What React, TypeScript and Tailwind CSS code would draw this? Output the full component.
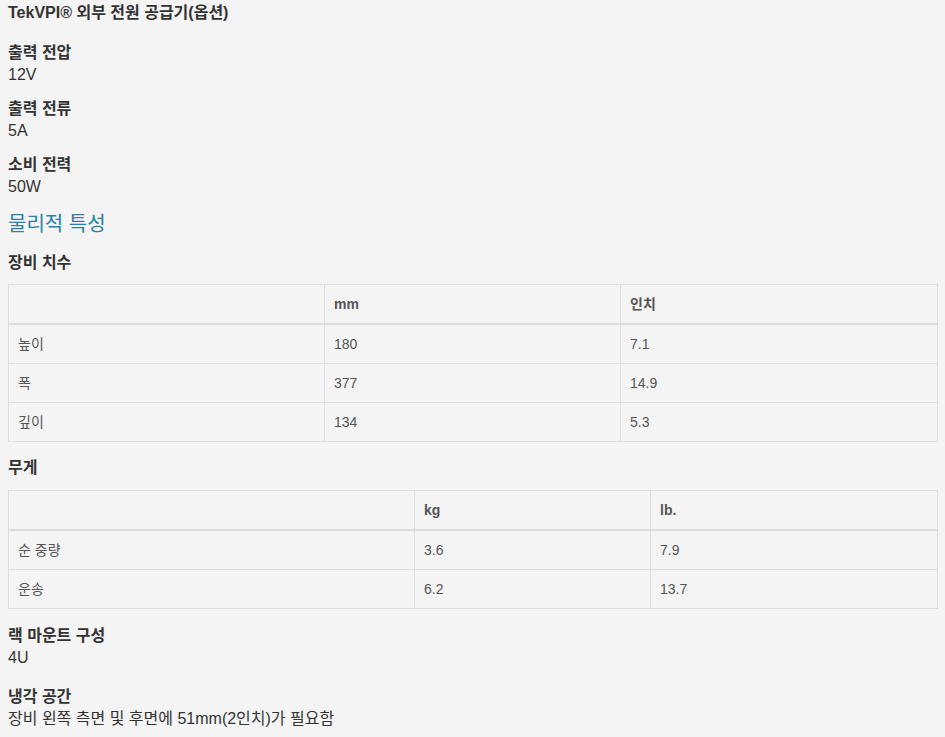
import React from "react";

const font = { fontFamily: '"Liberation Sans", Arial, "Noto Sans CJK KR", sans-serif' };

function Spec({ label, value, className = "" }: { label: string; value: string; className?: string }) {
  return (
    <div className={className}>
      <div className="text-[16px] leading-[22px] font-bold text-[#333]">{label}</div>
      <div className="text-[16px] leading-[22px] text-[#333]">{value}</div>
    </div>
  );
}

function Table({ widths, head, rows }: { widths: string[]; head: string[]; rows: string[][] }) {
  return (
    <table className="w-[929px] table-fixed border-collapse text-[14px] text-[#555]">
      <colgroup>
        {widths.map((w, i) => (
          <col key={i} className={w} />
        ))}
      </colgroup>
      <thead>
        <tr>
          {head.map((h, i) => (
            <th
              key={i}
              className="border border-[#dddddd] border-b-2 px-[9px] py-[9px] leading-[20px] text-left font-bold"
            >
              {h}
            </th>
          ))}
        </tr>
      </thead>
      <tbody>
        {rows.map((r, ri) => (
          <tr key={ri}>
            {r.map((c, ci) => (
              <td key={ci} className="border border-[#dddddd] px-[9px] py-[9px] leading-[20px]">
                {c}
              </td>
            ))}
          </tr>
        ))}
      </tbody>
    </table>
  );
}

export default function App() {
  return (
    <div className="min-h-[737px] w-full bg-[#f4f4f4] px-[8px] pt-[2px]" style={font}>
      <div className="text-[16px] leading-[22px] font-bold text-[#333]">TekVPI® 외부 전원 공급기(옵션)</div>
      <Spec className="mt-[18px]" label="출력 전압" value="12V" />
      <Spec className="mt-[12px]" label="출력 전류" value="5A" />
      <Spec className="mt-[12px]" label="소비 전력" value="50W" />
      <div className="mt-[13px] text-[20px] leading-[26px] text-[#2a7fa3]">물리적 특성</div>
      <div className="mt-[15px] text-[16px] leading-[22px] font-bold text-[#333]">장비 치수</div>
      <div className="mt-[10px]">
        <Table
          widths={["w-[316px]", "w-[296px]", "w-[317px]"]}
          head={["", "mm", "인치"]}
          rows={[
            ["높이", "180", "7.1"],
            ["폭", "377", "14.9"],
            ["깊이", "134", "5.3"],
          ]}
        />
      </div>
      <div className="mt-[15px] text-[16px] leading-[22px] font-bold text-[#333]">무게</div>
      <div className="mt-[11px]">
        <Table
          widths={["w-[406px]", "w-[236px]", "w-[287px]"]}
          head={["", "kg", "lb."]}
          rows={[
            ["순 중량", "3.6", "7.9"],
            ["운송", "6.2", "13.7"],
          ]}
        />
      </div>
      <Spec className="mt-[16px]" label="랙 마운트 구성" value="4U" />
      <Spec className="mt-[17px]" label="냉각 공간" value="장비 왼쪽 측면 및 후면에 51mm(2인치)가 필요함" />
    </div>
  );
}
